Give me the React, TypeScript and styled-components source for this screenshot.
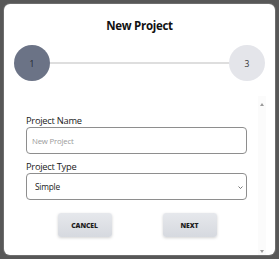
import React from "react";
import styled, { createGlobalStyle } from "styled-components";

const Global = createGlobalStyle`
  html, body { margin: 0; padding: 0; background: #585858; }
  body { font-family: "Open Sans", "Noto Sans", sans-serif; }
  * { box-sizing: border-box; }
`;

const Screen = styled.div`
  width: 279px;
  height: 259px;
  padding: 4px;
  background: #585858;
`;

const Dialog = styled.div`
  width: 271px;
  height: 251px;
  background: #fff;
  border-radius: 6px;
  display: flex;
  flex-direction: column;
  overflow: hidden;
  box-shadow: 0 0 0 1px #6e6e6e;
`;

const Title = styled.h1`
  margin: 0;
  padding-top: 14px;
  font-size: 11.5px;
  line-height: 16px;
  letter-spacing: -0.3px;
  font-weight: 700;
  color: #111;
  text-align: center;
`;

const Stepper = styled.div`
  display: flex;
  align-items: center;
  padding: 0 10px;
  margin-top: 11px;
`;

const Circle = styled.div<{ $active?: boolean }>`
  width: 36px;
  height: 36px;
  border-radius: 50%;
  flex: none;
  display: flex;
  align-items: center;
  justify-content: center;
  font-size: 8.5px;
  color: ${(p) => (p.$active ? "#1e2230" : "#333")};
  background: ${(p) => (p.$active ? "#6b7386" : "#e4e5ea")};
`;

const Line = styled.div`
  flex: 1;
  height: 2px;
  background: #dedede;
`;

const Body = styled.div`
  flex: 1;
  display: flex;
  margin-top: 15px;
  min-height: 0;
`;

const Content = styled.div`
  flex: 1;
  padding: 18px 10px 0 22px;
  display: flex;
  flex-direction: column;
`;

const Label = styled.label<{ $gap?: number }>`
  display: block;
  font-size: 9.3px;
  line-height: 13px;
  letter-spacing: -0.25px;
  color: #1a1a1a;
  margin-top: ${(p) => p.$gap ?? 0}px;
`;

const Field = styled.input`
  width: 221px;
  height: 27px;
  border: 1px solid #8e8e8e;
  border-radius: 4px;
  padding: 0 0 0 5px;
  font-family: inherit;
  font-size: 7.8px;
  letter-spacing: -0.2px;
  color: #222;
  outline: none;
  &::placeholder { color: #9a9a9a; }
`;

const SelectWrap = styled.div`
  position: relative;
  width: 221px;
  height: 27px;
`;

const Select = styled.select`
  appearance: none;
  width: 100%;
  height: 100%;
  border: 1px solid #8e8e8e;
  border-radius: 4px;
  padding: 0 0 0 8px;
  background: #fff;
  font-family: inherit;
  font-size: 8.3px;
  letter-spacing: -0.2px;
  color: #1a1a1a;
  outline: none;
`;

const Chevron = styled.svg`
  position: absolute;
  right: 4px;
  top: 13px;
  pointer-events: none;
`;

const Buttons = styled.div`
  display: flex;
  justify-content: center;
  gap: 51px;
  margin-top: 13px;
`;

const Button = styled.button`
  width: 54px;
  height: 24px;
  border: none;
  border-radius: 3px;
  background: linear-gradient(#e6e8ec, #d6d9df);
  box-shadow: 0 1px 3px rgba(0, 0, 0, 0.18);
  font-family: inherit;
  font-weight: 800;
  font-size: 6.8px;
  letter-spacing: -0.1px;
  color: #1e1e1e;
  padding: 0;
`;

const Rail = styled.div`
  width: 8px;
  margin-right: 9px;
  background: #fbfbfb;
  display: flex;
  flex-direction: column;
  justify-content: space-between;
  align-items: center;
  padding: 7px 0 2px;
`;

const Arrow = styled.div<{ $down?: boolean }>`
  width: 0;
  height: 0;
  border-left: 2.5px solid transparent;
  border-right: 2.5px solid transparent;
  ${(p) =>
    p.$down
      ? "border-top: 3px solid #9a9a9a;"
      : "border-bottom: 3px solid #9a9a9a;"}
`;

export default function App() {
  return (
    <>
      <Global />
      <Screen>
        <Dialog>
          <Title>New Project</Title>
          <Stepper>
            <Circle $active>1</Circle>
            <Line />
            <Circle>3</Circle>
          </Stepper>
          <Body>
            <Content>
              <Label>Project Name</Label>
              <Field placeholder="New Project" />
              <Label $gap={6}>Project Type</Label>
              <SelectWrap>
                <Select defaultValue="Simple">
                  <option>Simple</option>
                </Select>
                <Chevron width="5" height="3" viewBox="0 0 5 3">
                  <path d="M0.5 0.5 L2.5 2.5 L4.5 0.5" fill="none" stroke="#555" strokeWidth="0.8" />
                </Chevron>
              </SelectWrap>
              <Buttons>
                <Button>CANCEL</Button>
                <Button>NEXT</Button>
              </Buttons>
            </Content>
            <Rail>
              <Arrow />
              <Arrow $down />
            </Rail>
          </Body>
        </Dialog>
      </Screen>
    </>
  );
}
